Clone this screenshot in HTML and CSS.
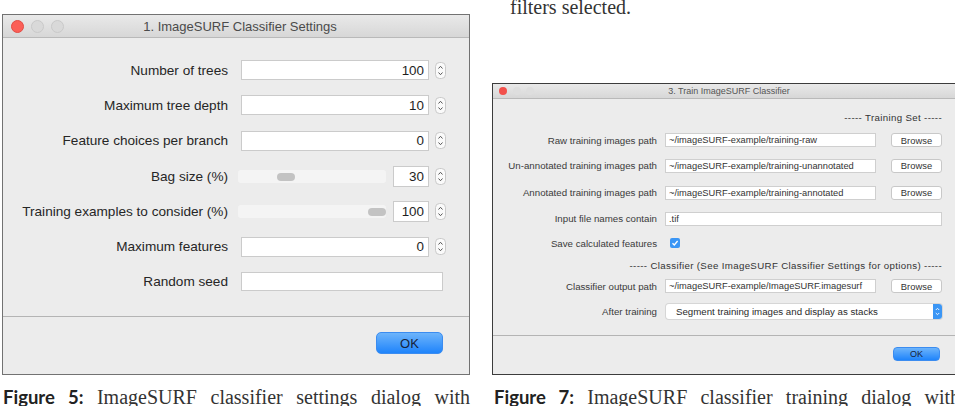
FILE: index.html
```html
<!DOCTYPE html>
<html>
<head>
  <title>ImageSURF dialogs</title>
  <link rel="stylesheet" href="styles.css">
</head>
<body>

<div class="page">

  <!-- Figure 5: classifier settings -->
  <div class="col col-left">
    <div class="window win-settings">
      <div class="titlebar">
        <span class="lights"><i class="light red"></i><i class="light"></i><i class="light"></i></span>
        <span class="title">1. ImageSURF Classifier Settings</span>
      </div>

      <div class="form">
        <div class="row">
          <label>Number of trees</label>
          <input class="field num" type="text" value="100">
          <svg class="spin" viewBox="0 0 11 17"><rect x="0.5" y="0.5" width="10" height="16" rx="4" fill="#fafafa" stroke="#c9c9c9"/><path d="M3.5 6.5 L5.5 4.3 L7.5 6.5 M3.5 10.5 L5.5 12.7 L7.5 10.5" fill="none" stroke="#555" stroke-width="1"/></svg>
        </div>
        <div class="row">
          <label>Maximum tree depth</label>
          <input class="field num" type="text" value="10">
          <svg class="spin" viewBox="0 0 11 17"><rect x="0.5" y="0.5" width="10" height="16" rx="4" fill="#fafafa" stroke="#c9c9c9"/><path d="M3.5 6.5 L5.5 4.3 L7.5 6.5 M3.5 10.5 L5.5 12.7 L7.5 10.5" fill="none" stroke="#555" stroke-width="1"/></svg>
        </div>
        <div class="row">
          <label>Feature choices per branch</label>
          <input class="field num" type="text" value="0">
          <svg class="spin" viewBox="0 0 11 17"><rect x="0.5" y="0.5" width="10" height="16" rx="4" fill="#fafafa" stroke="#c9c9c9"/><path d="M3.5 6.5 L5.5 4.3 L7.5 6.5 M3.5 10.5 L5.5 12.7 L7.5 10.5" fill="none" stroke="#555" stroke-width="1"/></svg>
        </div>
        <div class="row">
          <label>Bag size (%)</label>
          <div class="slider"><span class="knob" style="--value: 0.3"></span></div>
          <input class="field num small" type="text" value="30">
          <svg class="spin" viewBox="0 0 11 17"><rect x="0.5" y="0.5" width="10" height="16" rx="4" fill="#fafafa" stroke="#c9c9c9"/><path d="M3.5 6.5 L5.5 4.3 L7.5 6.5 M3.5 10.5 L5.5 12.7 L7.5 10.5" fill="none" stroke="#555" stroke-width="1"/></svg>
        </div>
        <div class="row">
          <label>Training examples to consider (%)</label>
          <div class="slider"><span class="knob" style="--value: 1"></span></div>
          <input class="field num small" type="text" value="100">
          <svg class="spin" viewBox="0 0 11 17"><rect x="0.5" y="0.5" width="10" height="16" rx="4" fill="#fafafa" stroke="#c9c9c9"/><path d="M3.5 6.5 L5.5 4.3 L7.5 6.5 M3.5 10.5 L5.5 12.7 L7.5 10.5" fill="none" stroke="#555" stroke-width="1"/></svg>
        </div>
        <div class="row">
          <label>Maximum features</label>
          <input class="field num" type="text" value="0">
          <svg class="spin" viewBox="0 0 11 17"><rect x="0.5" y="0.5" width="10" height="16" rx="4" fill="#fafafa" stroke="#c9c9c9"/><path d="M3.5 6.5 L5.5 4.3 L7.5 6.5 M3.5 10.5 L5.5 12.7 L7.5 10.5" fill="none" stroke="#555" stroke-width="1"/></svg>
        </div>
        <div class="row">
          <label>Random seed</label>
          <input class="field wide" type="text" value="">
        </div>
      </div>

      <div class="footer">
        <button class="ok">OK</button>
      </div>
    </div>
    <p class="caption"><b>Figure 5:</b> ImageSURF classifier settings dialog with</p>
  </div>

  <!-- Figure 7: training dialog -->
  <div class="col col-right">
    <p class="prose">filters selected.</p>

    <div class="window win-train">
      <div class="titlebar">
        <span class="lights"><i class="light red"></i><i class="light"></i><i class="light"></i></span>
        <span class="title">3. Train ImageSURF Classifier</span>
      </div>

      <div class="form">
        <div class="row h21 heading">----- Training Set -----</div>
        <div class="row h24">
          <label>Raw training images path</label>
          <input class="field path" type="text" value="~/imageSURF-example/training-raw">
          <button class="browse">Browse</button>
        </div>
        <div class="row h27">
          <label>Un-annotated training images path</label>
          <input class="field path" type="text" value="~/imageSURF-example/training-unannotated">
          <button class="browse">Browse</button>
        </div>
        <div class="row h27">
          <label>Annotated training images path</label>
          <input class="field path" type="text" value="~/imageSURF-example/training-annotated">
          <button class="browse">Browse</button>
        </div>
        <div class="row h25">
          <label>Input file names contain</label>
          <input class="field grow" type="text" value=".tif">
        </div>
        <div class="row h24">
          <label>Save calculated features</label>
          <svg class="check" viewBox="0 0 10 10"><rect width="10" height="10" rx="2" fill="#3b96f5"/><path d="M2.5 5.2 L4.3 7 L7.6 3" fill="none" stroke="#fff" stroke-width="1.3"/></svg>
        </div>
        <div class="row h20 heading">----- Classifier (See ImageSURF Classifier Settings for options) -----</div>
        <div class="row h22">
          <label>Classifier output path</label>
          <input class="field path" type="text" value="~/imageSURF-example/ImageSURF.imagesurf">
          <button class="browse">Browse</button>
        </div>
        <div class="row h28">
          <label>After training</label>
          <div class="select">
            <span>Segment training images and display as stacks</span>
            <svg class="arrows" viewBox="0 0 9 15"><path d="M0 0 H6 A3 3 0 0 1 9 3 V12 A3 3 0 0 1 6 15 H0 Z" fill="#3b96f5"/><path d="M2.8 6 L4.5 4.3 L6.2 6 M2.8 9 L4.5 10.7 L6.2 9" fill="none" stroke="#fff" stroke-width="0.9"/></svg>
          </div>
        </div>
      </div>

      <div class="footer">
        <button class="ok">OK</button>
      </div>
    </div>
    <p class="caption"><b>Figure 7:</b> ImageSURF classifier training dialog with</p>
  </div>

</div>

</body>
</html>
```

FILE: styles.css
```css
html, body {
  margin: 0;
  overflow: hidden;
  background-color: #fff;
}

.page {
  display: grid;
  grid-template-columns: 468px 468px;
  column-gap: 22px;
  padding-left: 2px;
  width: 960px;
}

.col {
  display: flex;
  flex-direction: column;
}

.col-left {
  padding-top: 14px;
}

/* paper text around the figures */
.prose {
  margin: -3px 0 0 18px;
  font: 20px/20px "Liberation Serif", serif;
  color: #333;
}

.caption {
  margin: 12px 0 0 1px;
  font: 20px/20px "Liberation Serif", serif;
  color: #333;
  text-align: justify;
  text-align-last: justify;
}

.caption b {
  font-family: "Lato", sans-serif;
  font-size: 18.5px;
  font-weight: bold;
  color: #222;
}

.col-right .caption {
  margin-left: 2px;
}

.col-right .window {
  margin-top: 66px;
}

/* mac window chrome */
.window {
  box-sizing: border-box;
  border: 1px solid #727272;
  background-color: #ececec;
  font-family: "Liberation Sans", Arial, sans-serif;
  color: #262626;
}

.titlebar {
  display: grid;
  grid-template-columns: 1fr auto 1fr;
  align-items: center;
  background: linear-gradient(#e9e9e9, #d7d7d7);
  border-bottom: 1px solid #b9b9b9;
}

.lights {
  display: flex;
}

.light {
  display: block;
  box-sizing: border-box;
  border-radius: 50%;
  background-color: #d9d9d9;
  border: 1px solid #c9c9c9;
}

.light.red {
  background-color: #fb5f57;
  border-color: #e24b44;
}

.title {
  color: #4b4b4b;
}

.field {
  box-sizing: border-box;
  margin: 0;
  border: 1px solid #cbcbcb;
  background-color: #fff;
  font-family: "Liberation Sans", Arial, sans-serif;
  color: #1e1e1e;
  outline: none;
}

.num {
  text-align: right;
}

.footer {
  display: flex;
  justify-content: flex-end;
  border-top: 1px solid #b4b4b4;
}

.ok {
  box-sizing: border-box;
  border: 1px solid #3b8cf0;
  background: linear-gradient(#6db4fb, #1f84fb);
  font-family: "Liberation Sans", Arial, sans-serif;
  color: #16233a;
  padding: 0;
}

/* settings dialog (figure 5) */
.win-settings {
  height: 361px;
  width: 468px;
}

.win-settings .titlebar {
  height: 23px;
  box-sizing: border-box;
  padding-left: 8px;
}

.win-settings .lights {
  gap: 7px;
}

.win-settings .light {
  width: 13px;
  height: 13px;
}

.win-settings .title {
  font-size: 13px;
}

.win-settings .form {
  box-sizing: border-box;
  height: 278px;
  padding-top: 14.5px;
}

.win-settings .row {
  display: flex;
  align-items: center;
  height: 35.3px;
}

.win-settings label {
  width: 225px;
  text-align: right;
  font-size: 13.6px;
  margin-right: 13px;
}

.win-settings .field {
  width: 188px;
  height: 20px;
  padding: 0 4px;
  font-size: 13.4px;
}

.win-settings .field.small {
  width: 36px;
  height: 21px;
}

.win-settings .field.wide {
  width: 202px;
  height: 19px;
}

.spin {
  width: 11px;
  height: 17px;
  margin-left: 6px;
}

.slider {
  position: relative;
  width: 148px;
  height: 13px;
  margin-left: -3px;
  margin-right: 7px;
  border-radius: 3px;
  background-color: #f4f4f4;
}

.knob {
  position: absolute;
  top: 3px;
  left: calc(var(--value) * (100% - 18px));
  width: 18px;
  height: 8px;
  border-radius: 4px;
  background-color: #c3c3c3;
}

.win-settings .footer {
  height: 59px;
  box-sizing: border-box;
  padding: 15px 26px 0 0;
}

.win-settings .ok {
  width: 67px;
  height: 22px;
  border-radius: 5px;
  font-size: 13px;
}

/* training dialog (figure 7) */
.win-train {
  height: 292px;
  width: 468px;
  border-color: #3c3c3c;
}

.win-train .titlebar {
  height: 15px;
  box-sizing: border-box;
  padding-left: 6px;
}

.win-train .lights {
  gap: 5.5px;
}

.win-train .light {
  width: 8px;
  height: 8px;
  border: none;
  background-color: #dedede;
}

.win-train .light.red {
  background-color: #f2504b;
}

.win-train .title {
  font-size: 9px;
  color: #555;
}

.win-train .form {
  box-sizing: border-box;
  height: 236px;
  padding: 8px 17px 0 0;
}

.win-train .row {
  display: flex;
  align-items: center;
}

.h20 { height: 20px; }
.h21 { height: 21px; }
.h22 { height: 22px; }
.h24 { height: 24px; }
.h25 { height: 25px; }
.h27 { height: 27px; }
.h28 { height: 28px; }

.win-train .heading {
  justify-content: flex-end;
  font-size: 9.7px;
  letter-spacing: 0.35px;
  color: #333;
}

.win-train label {
  width: 164px;
  margin-right: 8px;
  text-align: right;
  font-size: 9.7px;
  color: #3a3a3a;
}

.win-train .field {
  height: 14px;
  padding: 0 3px;
  font-size: 9.3px;
  border-color: #cfcfcf;
  color: #333;
}

.win-train .path {
  width: 211px;
  margin-right: 15px;
}

.win-train .grow {
  flex: 1;
}

.browse {
  box-sizing: border-box;
  width: 51px;
  height: 14px;
  padding: 0;
  border: 1px solid #c8c8c8;
  border-radius: 3px;
  background-color: #fff;
  font-family: "Liberation Sans", Arial, sans-serif;
  font-size: 9.4px;
  color: #333;
}

.check {
  width: 10px;
  height: 10px;
  margin-left: 5px;
}

.select {
  flex: 1;
  display: flex;
  align-items: center;
  justify-content: space-between;
  box-sizing: border-box;
  height: 15px;
  margin-left: 1px;
  padding-left: 10px;
  border-radius: 3px;
  background-color: #fff;
  box-shadow: 0 0 0 1px #d6d6d6;
  font-size: 9.7px;
  color: #2a2a2a;
}

.arrows {
  width: 9px;
  height: 15px;
}

.win-train .footer {
  height: 40px;
  box-sizing: border-box;
  padding: 11px 19px 0 0;
}

.win-train .ok {
  width: 47px;
  height: 14px;
  border-radius: 4px;
  font-size: 9px;
}
```
